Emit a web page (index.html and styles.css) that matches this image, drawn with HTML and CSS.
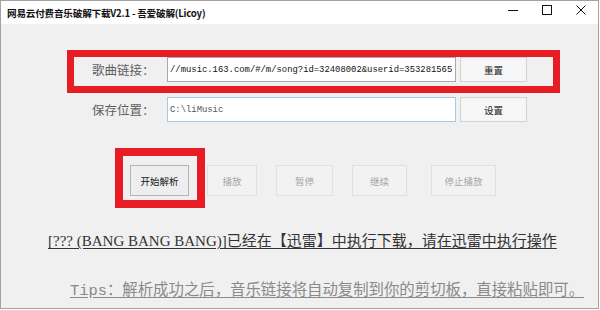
FILE: index.html
```html
<!DOCTYPE html>
<html lang="zh-CN">
<head>
    <meta charset="UTF-8">
    <title>网易云付费音乐破解下载V2.1 - 吾爱破解(Licoy)</title>
    <link rel="stylesheet" href="styles.css">
</head>
<body>
    <div class="window">
        <div class="titlebar">
            <span class="title">网易云付费音乐破解下载V2.1 - 吾爱破解(Licoy)</span>
            <div class="win-controls">
                <span class="ctl"><svg width="10" height="10" viewBox="0 0 10 10"><path d="M0 5.5h10" stroke="#111" stroke-width="1"/></svg></span>
                <span class="ctl"><svg width="10" height="10" viewBox="0 0 10 10"><rect x="0.5" y="0.5" width="9" height="9" fill="none" stroke="#111" stroke-width="1"/></svg></span>
                <span class="ctl"><svg width="10" height="10" viewBox="0 0 10 10"><path d="M0.5 0.5l9 9M9.5 0.5l-9 9" stroke="#111" stroke-width="1"/></svg></span>
            </div>
        </div>

        <div class="content">
            <div class="form-row">
                <label class="field-label">歌曲链接：</label>
                <input class="field" value="//music.163.com/#/m/song?id=32408002&amp;userid=353281565">
                <button class="btn">重置</button>
            </div>
            <div class="form-row">
                <label class="field-label">保存位置：</label>
                <input class="field field-focus" value="C:\liMusic">
                <button class="btn">设置</button>
            </div>

            <div class="actions">
                <button class="btn btn-main">开始解析</button>
                <button class="btn btn-play" disabled>播放</button>
                <button class="btn btn-pause" disabled>暂停</button>
                <button class="btn btn-resume" disabled>继续</button>
                <button class="btn btn-stop" disabled>停止播放</button>
            </div>

            <p class="status">[??? (BANG BANG BANG)]已经在【迅雷】中执行下载，请在迅雷中执行操作</p>
            <p class="tips">Tips：解析成功之后，音乐链接将自动复制到你的剪切板，直接粘贴即可。</p>
        </div>

        <div class="mark mark-link"></div>
        <div class="mark mark-start"></div>
    </div>
</body>
</html>
```

FILE: styles.css
```css
body {
    margin: 0;
    background-color: #fff;
    font-family: "Noto Sans CJK SC", sans-serif;
}

.window {
    position: relative;
    width: 599px;
    height: 309px;
    box-sizing: border-box;
    border: 1px solid #a3a3a3;
    background-color: #f0f0f0;
    overflow: hidden;
}

.titlebar {
    height: 23px;
    background-color: #fff;
    display: flex;
    align-items: center;
    padding-left: 6px;
}

.title {
    font-size: 9.6px;
    font-weight: 600;
    color: #111;
    letter-spacing: -0.2px;
}

.win-controls {
    margin-left: auto;
    align-self: flex-start;
    display: flex;
}

.ctl {
    width: 34px;
    height: 17px;
    display: flex;
    align-items: center;
    justify-content: center;
}

.content {
    padding-top: 33px;
}

.form-row {
    display: flex;
    align-items: center;
    height: 25px;
    padding-left: 91px;
    margin-bottom: 15px;
}

.field-label {
    width: 75px;
    font-size: 12.5px;
    color: #5f5f5f;
}

.field {
    width: 289px;
    height: 25px;
    box-sizing: border-box;
    border: 1px solid #a9a9a9;
    background-color: #fff;
    padding: 0 0 0 2px;
    font-family: "Liberation Mono", monospace;
    font-size: 8.9px;
    color: #111;
    outline: none;
}

.field-focus {
    border-color: #a9c8e8;
    color: #555;
}

.btn {
    height: 25px;
    width: 67px;
    margin-left: 4px;
    box-sizing: border-box;
    border: 1px solid #d2d2d2;
    background-color: #f6f6f6;
    font-family: "Noto Sans CJK SC", sans-serif;
    font-size: 9.5px;
    color: #222;
    padding: 0;
}

.actions {
    display: flex;
    margin-top: 43px;
    padding-left: 129px;
}

.actions .btn {
    height: 31px;
    margin-left: 0;
    margin-right: 19px;
}

.actions .btn-main {
    width: 59px;
    margin-right: 18px;
    border-color: #b4b4b4;
    background-color: #eeeeee;
    color: #111;
}

.actions .btn-play { width: 50px; }
.actions .btn-pause { width: 57px; }
.actions .btn-resume { width: 55px; margin-right: 24px; }
.actions .btn-stop { width: 65px; }

.btn:disabled {
    color: #a6a6a6;
    border-color: #e0e0e0;
    background-color: #f2f2f2;
}

.status {
    margin: 35px 0 0;
    padding-left: 47px;
    font-family: "Liberation Serif", "Noto Sans CJK SC", serif;
    font-size: 15px;
    line-height: 20px;
    color: #333;
    text-decoration: underline;
    text-underline-offset: 2px;
}

.tips {
    margin: 30px 0 0;
    padding-left: 69px;
    font-family: "Liberation Mono", "Noto Sans CJK SC", monospace;
    font-size: 15.4px;
    line-height: 20px;
    color: #8a8a8a;
    text-decoration: underline;
    text-underline-offset: 2px;
}

.mark {
    position: absolute;
    border: 7px solid #e81c24;
    pointer-events: none;
}

.mark-link {
    left: 66px;
    top: 49px;
    width: 479px;
    height: 29px;
}

.mark-start {
    left: 114px;
    top: 147px;
    width: 74px;
    height: 44px;
    border-width: 8px;
}
```
